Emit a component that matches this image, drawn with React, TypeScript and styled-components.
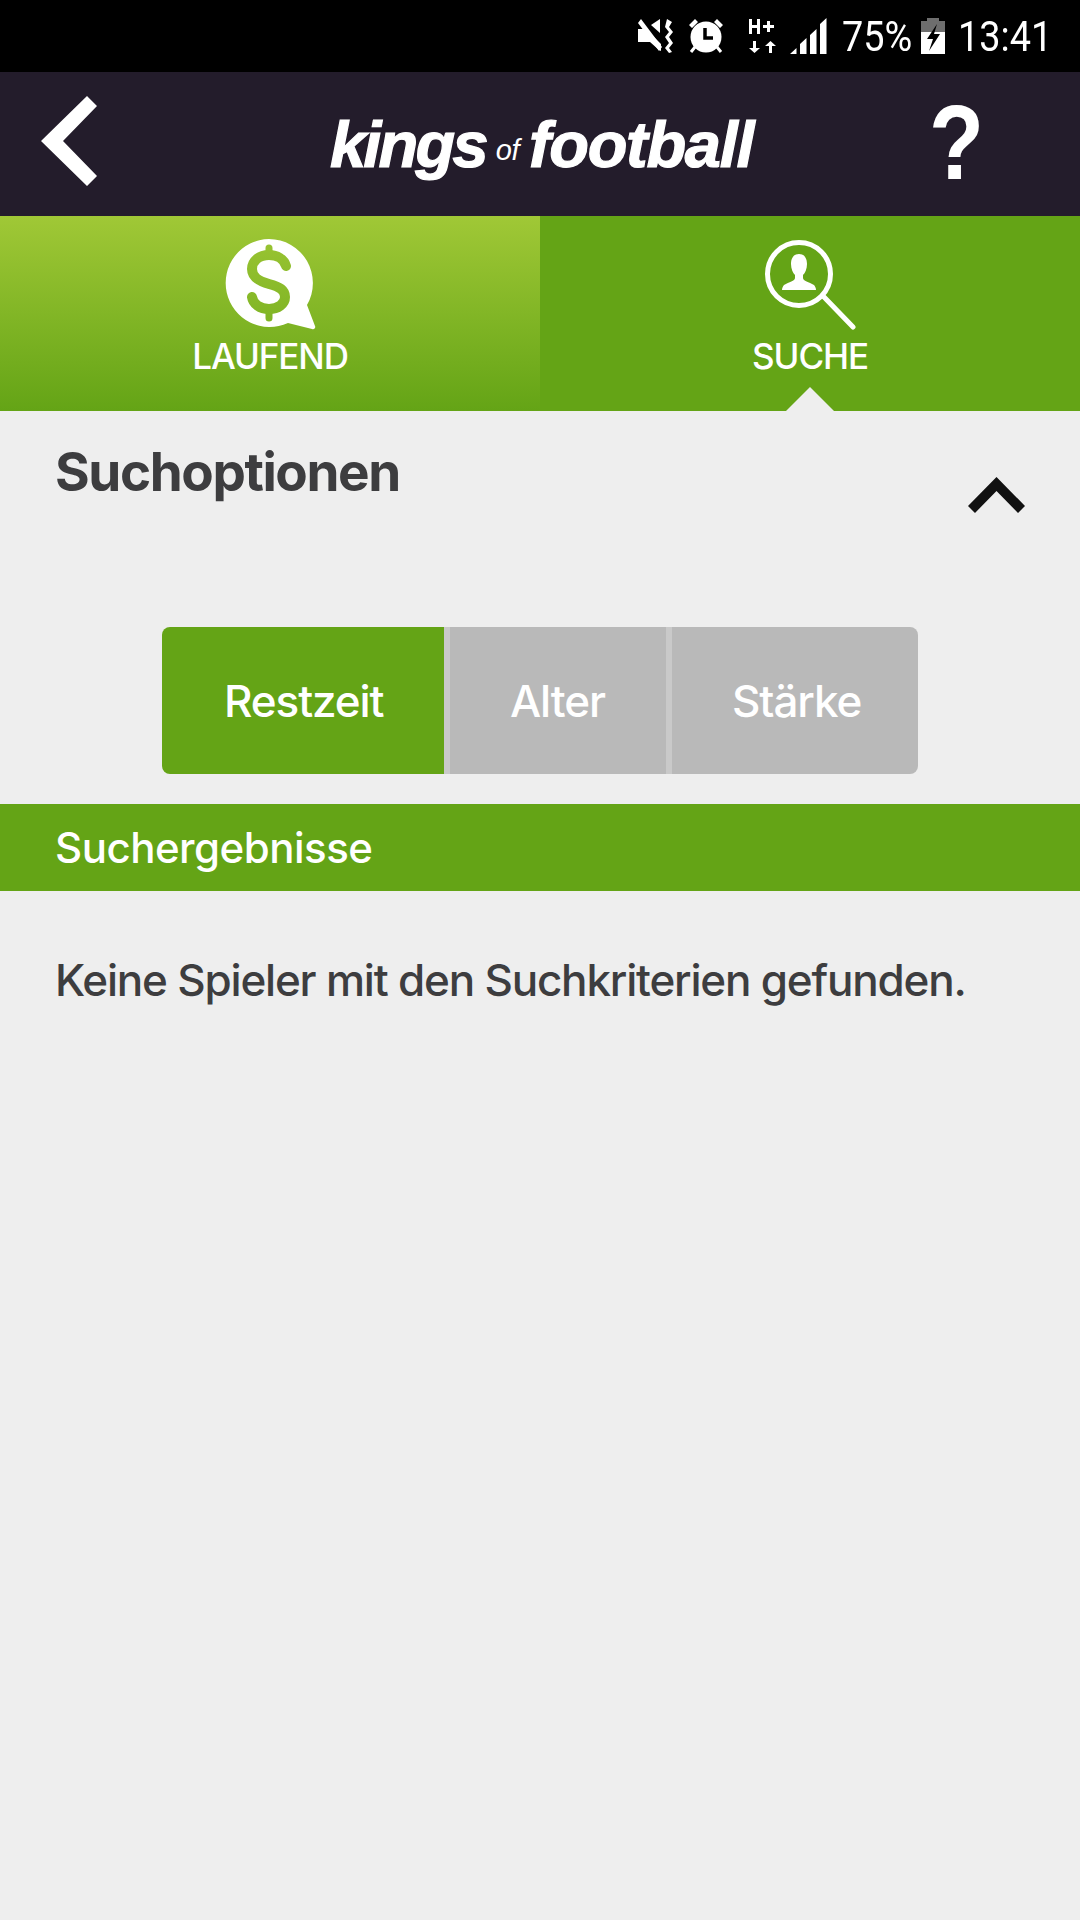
import React from "react";
import styled, { createGlobalStyle } from "styled-components";

const Global = createGlobalStyle`
  html, body { margin: 0; padding: 0; background: #eeeeee; }
  * { box-sizing: border-box; }
`;
const Page = styled.div`
  width: 1080px; height: 1920px; background: #eeeeee; overflow: hidden;
  display: flex; flex-direction: column;
  font-family: Inter, "Liberation Sans", sans-serif;
`;
const StatusBar = styled.div`
  height: 72px; background: #000; color: #fff; display: flex; align-items: center;
  padding-left: 638px; font-family: Roboto, sans-serif; font-weight: 400;
  svg { display: block; flex: none; }
`;
const StatusText = styled.span<{ $w: number; $ml: number }>`
  display: block; width: ${p => p.$w}px; margin-left: ${p => p.$ml}px;
  font-size: 43px; line-height: 72px; white-space: nowrap; transform: scaleX(0.88); transform-origin: left center;
`;
const Header = styled.header`
  height: 144px; background: #231c2b; display: flex; align-items: center; position: relative;
  padding-left: 41px;
  svg { display: block; flex: none; margin-bottom: 6px; }
`;
const Logo = styled.div`
  margin-left: 233px; width: 600px; display: flex; align-items: baseline; color: #fff; height: 144px; padding-top: 37px;
  font-family: "Liberation Sans", sans-serif; font-style: italic; font-weight: 700; font-size: 65px; line-height: 72px;
  -webkit-text-stroke: 1.2px #fff;
`;
const LogoKings = styled.span`letter-spacing: -2.8px;`;
const LogoOf = styled.span`
  font-size: 29px; font-weight: 400; letter-spacing: -0.5px; margin: 0 10px 0 10px; position: relative; top: -7px;
  -webkit-text-stroke: 0;
`;
const LogoFootball = styled.span`letter-spacing: -1.3px;`;
const Help = styled.span`
  position: absolute; left: 929px; top: 12px; color: #fff; font-family: "Liberation Sans", sans-serif; font-weight: 700;
  font-size: 106px; line-height: 116px; transform: scaleX(0.85); transform-origin: left center;
`;
const Tabs = styled.nav`height: 195px; display: flex;`;
const Tab = styled.div<{ $active?: boolean }>`
  flex: 1; position: relative; display: flex; flex-direction: column; align-items: center; color: #fff;
  padding-top: 22px;
  background: ${p => (p.$active ? "#64a416" : "linear-gradient(#a0c836, #64a416)")};
  svg { display: block; }
`;
const TabLabel = styled.span`
  font-size: 35px; font-weight: 500; line-height: 44px; letter-spacing: -1.1px; margin-top: 4px;
`;
const Pointer = styled.span`
  position: absolute; left: 246px; bottom: 0; width: 0; height: 0;
  border-left: 24px solid transparent; border-right: 24px solid transparent; border-bottom: 24px solid #eeeeee;
`;
const OptionsHead = styled.div`
  height: 216px; display: flex; align-items: flex-start; justify-content: space-between; padding: 27px 55px 0;
  svg { display: block; margin-top: 39px; }
`;
const OptionsTitle = styled.h2`
  margin: 0; font-size: 53px; font-weight: 700; line-height: 68px; letter-spacing: -1.4px; color: #3d3d3f;
`;
const SegmentRow = styled.div`display: flex; margin: 0 auto; width: 756px; height: 147px; border-radius: 8px; overflow: hidden;`;
const Segment = styled.div<{ $w: number; $active?: boolean; $pl: number }>`
  width: ${p => p.$w}px; height: 100%; color: #fff; display: flex; align-items: center; padding-left: ${p => p.$pl}px;
  background: ${p => (p.$active ? "#64a416" : "#b9b9b9")};
  font-size: 44px; font-weight: 500; letter-spacing: -1.1px; white-space: nowrap;
`;
const SegDivider = styled.div`width: 6px; height: 100%; background: #c9c9c9;`;
const ResultBand = styled.div`
  margin-top: 30px; height: 87px; background: #64a416; color: #fff; display: flex; align-items: center; padding-left: 55px;
  font-size: 42px; font-weight: 500; letter-spacing: -0.5px;
`;
const EmptyText = styled.p`
  margin: 61px 0 0 55px; font-size: 44px; font-weight: 500; line-height: 56px; letter-spacing: -1.2px; color: #3d3d3f; white-space: nowrap;
`;

export default function App() {
  return (
    <Page>
      <Global />
      <StatusBar>
        <svg width="37" height="36" viewBox="0 0 37 36" fill="#fff">
          <path d="M0 11h8l15 15v7l-2-1-9-8H0z" />
          <path d="M13 7l9-6v14z" />
          <path d="M3 1l21 28-3 4L0 5z" />
          <path d="M29 1l5 3-3 5 4 5-4 5 4 6-4 5 3 4-3 1-4-5 4-5-4-6 4-5-4-5z" />
        </svg>
        <svg width="36" height="36" viewBox="0 0 36 36" style={{ marginLeft: 13 }}>
          <circle cx="18" cy="19" r="15.500" fill="#fff" />
          <path d="M17 10v10h8" stroke="#000" strokeWidth="3.500" fill="none" />
          <path d="M1 7l6-6 3 3-6 6zM35 7l-6-6-3 3 6 6z" fill="#fff" />
          <path d="M7 29l-4 5M29 29l4 5" stroke="#fff" strokeWidth="3" />
        </svg>
        <svg width="28" height="36" viewBox="0 0 28 36" fill="#fff" style={{ marginLeft: 25 }}>
          <path d="M0 1h3v6h5V1h3v15H8V10H3v6H0zM18 3h3v4h4v3h-4v4h-3v-4h-4V7h4z" />
          <path d="M4 23h3v7h4l-5.500 5-5.500-5h4zM20 35h3v-7h4l-5.500-5-5.500 5h4z" />
        </svg>
        <svg width="37" height="36" viewBox="0 0 37 36" fill="#fff" style={{ marginLeft: 13 }}>
          <path d="M0 36l6.500-6v6zM10 36V26l6.500-6v16zM20 36V17l6.500-6v25zM30 36V6l6.500-6v36z" />
        </svg>
        <StatusText $w={72} $ml={15}>75%</StatusText>
        <svg width="24" height="36" viewBox="0 0 24 36" style={{ marginLeft: 7 }}>
          <path d="M6 0h12v3h6v11H0V3h6z" fill="#6e6e6e" />
          <path d="M0 14h24v22H0z" fill="#fff" />
          <path d="M16 6L6 21h6l-4 12 11-17h-6z" fill="#000" />
        </svg>
        <StatusText $w={95} $ml={13}>13:41</StatusText>
      </StatusBar>
      <Header>
        <svg width="56" height="90" viewBox="0 0 56 90" fill="#fff">
          <path d="M46 0l10 10-34 35 34 35-10 10L0 45z" />
        </svg>
        <Logo>
          <LogoKings>kings</LogoKings>
          <LogoOf>of</LogoOf>
          <LogoFootball>football</LogoFootball>
        </Logo>
        <Help>?</Help>
      </Header>
      <Tabs>
        <Tab>
          <svg width="92" height="92" viewBox="1 0 92 92">
            <mask id="dollar-cut">
              <path d="M46 1a44 44 0 0 1 38 66l8 21c1 2-1 4-3 3l-24-6A44 44 0 1 1 46 1z" fill="#fff" />
              <path d="M63 28c-2-7-9-11-17-11-10 0-17 6-17 14 0 8 6 12 17 15 11 3 16 6 16 13 0 7-7 12-16 12-9 0-16-5-17-12" fill="none" stroke="#000" strokeWidth="10" strokeLinecap="round" />
              <path d="M46 10v8M46 72v8" stroke="#000" strokeWidth="7" strokeLinecap="round" />
            </mask>
            <rect x="0" y="0" width="94" height="92" fill="#fff" mask="url(#dollar-cut)" />
          </svg>
          <TabLabel>LAUFEND</TabLabel>
        </Tab>
        <Tab $active>
          <svg width="92" height="92" viewBox="0 0 92 92">
            <circle cx="35" cy="36" r="31.500" fill="none" stroke="#fff" strokeWidth="5" />
            <path d="M60 59l29 30" stroke="#fff" strokeWidth="5" strokeLinecap="round" />
            <path d="M35 16c6 0 8 5 8 10 0 5-2 9-4 11v3c0 3 6 4 11 7 1 1 2 3 2 5H18c0-2 1-4 2-5 5-3 11-4 11-7v-3c-2-2-4-6-4-11 0-5 2-10 8-10z" fill="#fff" />
          </svg>
          <TabLabel>SUCHE</TabLabel>
          <Pointer />
        </Tab>
      </Tabs>
      <OptionsHead>
        <OptionsTitle>Suchoptionen</OptionsTitle>
        <svg width="57" height="36" viewBox="0 0 57 36" fill="#111">
          <path d="M28.500 0L57 29l-7 7-21.500-22L7 36l-7-7z" />
        </svg>
      </OptionsHead>
      <SegmentRow>
        <Segment $w={282} $active $pl={62}>Restzeit</Segment>
        <SegDivider />
        <Segment $w={216} $pl={60}>Alter</Segment>
        <SegDivider />
        <Segment $w={246} $pl={60}>Stärke</Segment>
      </SegmentRow>
      <ResultBand>Suchergebnisse</ResultBand>
      <EmptyText>Keine Spieler mit den Suchkriterien gefunden.</EmptyText>
    </Page>
  );
}
